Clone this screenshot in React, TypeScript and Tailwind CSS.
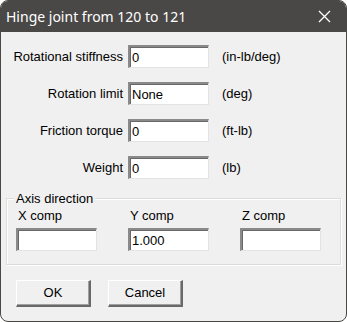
import React from 'react'

const ROWS = [
  { label: 'Rotational stiffness', value: '0', unit: '(in-lb/deg)' },
  { label: 'Rotation limit', value: 'None', unit: '(deg)' },
  { label: 'Friction torque', value: '0', unit: '(ft-lb)' },
  { label: 'Weight', value: '0', unit: '(lb)' },
]

const AXES = [
  { label: 'X comp', value: '' },
  { label: 'Y comp', value: '1.000' },
  { label: 'Z comp', value: '' },
]

const font = { fontFamily: '"Liberation Sans", Arial, sans-serif' }

function Field({ value }: { value: string }) {
  // classic sunken edit box
  return (
    <div className="w-[81px] h-[23px] bg-white border-t-2 border-l-2 border-b border-r border-t-[#8a8a8a] border-l-[#8a8a8a] border-b-[#e3e3e3] border-r-[#e3e3e3] shadow-[inset_1px_1px_0_#696969] flex items-center pl-[2px] text-[13px] text-black leading-none">
      {value}
    </div>
  )
}

function Button({ label }: { label: string }) {
  return (
    <div className="w-[75px] h-[27px] bg-[#f0f0f0] border-t border-l border-b-2 border-r-2 border-t-white border-l-white border-b-[#696969] border-r-[#696969] shadow-[inset_-1px_-1px_0_#a0a0a0] flex items-center justify-center text-[13px] text-black">
      {label}
    </div>
  )
}

export default function App() {
  return (
    <div className="w-[347px] h-[322px] bg-white">
      <div className="w-[347px] h-[322px] rounded-[8px] overflow-hidden border border-[#4a4846] bg-[#f0f0f0] flex flex-col" style={font}>
        {/* title bar */}
        <div className="h-[31px] bg-[#4a4846] flex items-center justify-between pl-[5px] pr-[15px] shrink-0">
          <span className="text-white text-[14px]" style={{ fontFamily: '"Noto Sans", "Open Sans", sans-serif' }}>Hinge joint from 120 to 121</span>
          <svg width="13" height="13" viewBox="0 0 13 13">
            <path d="M1 1 L12 12 M12 1 L1 12" stroke="#ffffff" strokeWidth="1.3" />
          </svg>
        </div>

        <div className="flex flex-col pt-[13px] text-[13px] text-black">
          <div className="flex flex-col gap-[14px]">
            {ROWS.map((r) => (
              <div key={r.label} className="flex items-center h-[23px]">
                <div className="w-[127px] text-right pr-[5px]">{r.label}</div>
                <Field value={r.value} />
                <div className="pl-[13px]">{r.unit}</div>
              </div>
            ))}
          </div>

          {/* axis group */}
          <div className="relative mt-[19px] mx-[5px] h-[67px] border border-[#dcdcdc] shadow-[1px_1px_0_white,inset_1px_1px_0_white]">
            <span className="absolute -top-[8px] left-[7px] bg-[#f0f0f0] px-[2px] leading-[15px]">Axis direction</span>
            <div className="flex gap-[31px] pl-[9px] pt-[9px]">
              {AXES.map((a) => (
                <div key={a.label} className="flex flex-col gap-[5px]">
                  <div className="leading-[15px] pl-[2px]">{a.label}</div>
                  <Field value={a.value} />
                </div>
              ))}
            </div>
          </div>

          <div className="flex gap-[17px] pl-[15px] mt-[15px]">
            <Button label="OK" />
            <Button label="Cancel" />
          </div>
        </div>
      </div>
    </div>
  )
}
